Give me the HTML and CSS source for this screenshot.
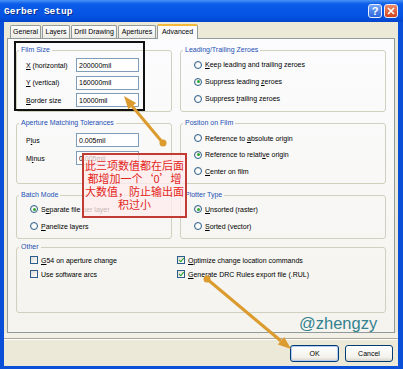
FILE: index.html
```html
<!DOCTYPE html>
<html lang="zh">
<head>
  <meta charset="UTF-8">
  <title>Gerber Setup</title>
  <link rel="stylesheet" href="styles.css">
</head>
<body>
  <div class="window">
    <div class="titlebar">
      <span class="title">Gerber Setup</span>
      <div class="title-btns">
        <span class="tbtn help">?</span>
        <span class="tbtn close">
          <svg width="8" height="8" viewBox="0 0 8 8"><path d="M1 1L7 7M7 1L1 7" stroke="#fff" stroke-width="1.6"/></svg>
        </span>
      </div>
    </div>

    <div class="client">
      <div class="tabs">
        <div class="tab t-general">General</div>
        <div class="tab t-layers">Layers</div>
        <div class="tab t-drill">Drill Drawing</div>
        <div class="tab t-apert">Apertures</div>
        <div class="tab t-adv active">Advanced</div>
      </div>

      <div class="panel">
        <div class="groups">
          <fieldset class="film">
            <legend>Film Size</legend>
            <div class="field-row"><label><u>X</u> (horizontal)</label><input value="200000mil"></div>
            <div class="field-row"><label><u>Y</u> (vertical)</label><input value="160000mil"></div>
            <div class="field-row"><label><u>B</u>order size</label><input value="10000mil"></div>
          </fieldset>

          <fieldset class="opts leading">
            <legend>Leading/Trailing Zeroes</legend>
            <div class="opt"><span class="radio"></span><span><u>K</u>eep leading and trailing zeroes</span></div>
            <div class="opt"><span class="radio on"></span><span>Suppress leading <u>z</u>eroes</span></div>
            <div class="opt"><span class="radio"></span><span>Suppress <u>t</u>railing zeroes</span></div>
          </fieldset>

          <fieldset class="aperture">
            <legend>Aperture Matching Tolerances</legend>
            <div class="field-row"><label>P<u>l</u>us</label><input value="0.005mil"></div>
            <div class="field-row"><label>M<u>i</u>nus</label><input value="0.005mil"></div>
          </fieldset>

          <fieldset class="opts position">
            <legend>Positon on Film</legend>
            <div class="opt"><span class="radio"></span><span>Reference to <u>a</u>bsolute origin</span></div>
            <div class="opt"><span class="radio on"></span><span>Reference to relati<u>v</u>e origin</span></div>
            <div class="opt"><span class="radio"></span><span><u>C</u>enter on film</span></div>
          </fieldset>

          <fieldset class="opts batch">
            <legend>Batch Mode</legend>
            <div class="opt"><span class="radio on"></span><span>S<u>e</u>parate file per layer</span></div>
            <div class="opt"><span class="radio"></span><span><u>P</u>anelize layers</span></div>
          </fieldset>

          <fieldset class="opts plotter">
            <legend>Plotter Type</legend>
            <div class="opt"><span class="radio on"></span><span><u>U</u>nsorted (raster)</span></div>
            <div class="opt"><span class="radio"></span><span><u>S</u>orted (vector)</span></div>
          </fieldset>
        </div>

        <fieldset class="other">
          <legend>Other</legend>
          <div class="checks">
            <div class="chk-row"><span class="check"></span><span><u>G</u>54 on aperture change</span></div>
            <div class="chk-row"><span class="check on"></span><span><u>O</u>ptimize change location commands</span></div>
            <div class="chk-row"><span class="check"></span><span>Use software arcs</span></div>
            <div class="chk-row"><span class="check on"></span><span><u>G</u>enerate DRC Rules export file (.RUL)</span></div>
          </div>
        </fieldset>
      </div>

      <div class="panel-foot"></div>
      <div class="buttons">
        <button class="btn default">OK</button>
        <button class="btn">Cancel</button>
      </div>
    </div>

    <!-- annotations drawn over the dialog -->
    <div class="film-mark"></div>
    <div class="callout">此三项数值都在后面<br>都增加一个‘0’增<br>大数值，防止输出面<br>积过小</div>
    <div class="watermark">@zhengzy</div>
    <svg class="arrows" width="403" height="369" viewBox="0 0 403 369">
      <g fill="#dc9b2e" stroke="#dc9b2e">
        <line x1="163" y1="143" x2="132" y2="106" stroke-width="3"/>
        <circle cx="163" cy="143" r="3.5" stroke="none"/>
        <polygon points="124,96 136.1,102.9 128.3,109.3" stroke="none"/>
        <line x1="207" y1="279" x2="281" y2="341" stroke-width="3"/>
        <circle cx="207" cy="279" r="3.5" stroke="none"/>
        <polygon points="291,349 277.8,344.5 284.2,336.9" stroke="none"/>
      </g>
    </svg>
  </div>
</body>
</html>
```

FILE: styles.css
```css
body {
  margin: 0;
  font-family: "Liberation Sans", Arial, sans-serif;
  font-size: 7px;
  color: #000;
}

.window {
  position: relative;
  width: 403px;
  height: 369px;
  background: #0a4fd8;
  display: flex;
  flex-direction: column;
  overflow: hidden;
}

/* title bar */
.titlebar {
  height: 22px;
  flex: none;
  display: flex;
  align-items: center;
  justify-content: space-between;
  padding: 0 5px 0 4px;
  background: linear-gradient(to bottom, #4a93f7 0%, #0b5ce9 18%, #0452e2 75%, #0345cb 100%);
}

.title {
  font-family: "Liberation Mono", monospace;
  font-weight: bold;
  font-size: 9.5px;
  color: #fff;
  text-shadow: 1px 1px 0 #0a2f8a;
}

.title-btns {
  display: flex;
  gap: 2px;
}

.tbtn {
  width: 14px;
  height: 14px;
  box-sizing: border-box;
  border: 1px solid #e8eefc;
  border-radius: 3px;
  display: flex;
  align-items: center;
  justify-content: center;
  color: #fff;
  font-weight: bold;
  font-size: 11px;
}

.tbtn.help {
  background: linear-gradient(to bottom, #76a5f7, #2b66dc);
}

.tbtn.close {
  background: linear-gradient(to bottom, #ee8a68, #d3431d);
}

/* dialog body */
.client {
  flex: 1;
  margin: 0 5px 3px 4px;
  background: #ece9d8;
  display: flex;
  flex-direction: column;
}

.tabs {
  display: flex;
  align-items: flex-end;
  gap: 1px;
  height: 14px;
  margin-top: 2px;
  padding-left: 6px;
}

.tab {
  height: 13px;
  box-sizing: border-box;
  border: 1px solid #919b9c;
  border-bottom: none;
  border-radius: 2px 2px 0 0;
  background: linear-gradient(to bottom, #ffffff, #ecebe5);
  text-align: center;
  line-height: 12px;
}

.t-general { width: 31px; }
.t-layers { width: 28px; }
.t-drill { width: 46px; }
.t-apert { width: 38px; }
.t-adv { width: 41px; }

.tab.active {
  height: 15px;
  margin-bottom: -1px;
  position: relative;
  z-index: 1;
  background: #fcfcfe;
  border-top: 2px solid #f5b93c;
  line-height: 12px;
}

.panel {
  height: 295px;
  box-sizing: border-box;
  margin: 0 3px;
  border: 1px solid #919b9c;
  background: linear-gradient(to bottom, #fcfcfe, #f4f3ee);
  padding: 7px 8px 0;
}

.groups {
  display: grid;
  grid-template-columns: 156px 206px;
  grid-template-rows: 66px 65px 48px;
  column-gap: 8px;
  row-gap: 7px;
}

fieldset {
  margin: 0;
  min-width: 0;
  box-sizing: border-box;
  border: 1px solid #d0d0bf;
  border-radius: 3px;
  padding: 0 0 0 13px;
}

legend {
  padding: 0 2px;
  margin-left: -11px;
  line-height: 8px;
  color: #2350b4;
}

/* text field rows */
.field-row {
  display: flex;
  align-items: center;
  height: 14px;
}

.film .field-row + .field-row {
  margin-top: 3.5px;
}

.aperture .field-row + .field-row {
  margin-top: 4px;
}

.field-row label {
  width: 50px;
}

.field-row input {
  width: 63px;
  height: 14px;
  box-sizing: border-box;
  border: 1px solid #7f9db9;
  padding: 0 2px;
  font-family: inherit;
  font-size: 7px;
  background: #fff;
}

.film {
  padding: 4px 0 0 9px;
}

.aperture {
  padding: 6px 0 0 9px;
}

.film legend,
.aperture legend {
  margin-left: -7px;
}

/* radio option lists */
.opt {
  display: flex;
  align-items: center;
  height: 17px;
}

.leading { padding-top: 2px; }
.position { padding-top: 3px; }
.position .opt { height: 16.5px; }
.batch, .plotter { padding-top: 1.5px; }

.radio {
  width: 8px;
  height: 8px;
  box-sizing: border-box;
  border: 1px solid #2c5d8c;
  border-radius: 50%;
  background: radial-gradient(circle at 60% 60%, #ffffff 30%, #dcdad0 100%);
  margin-right: 3px;
  display: flex;
  align-items: center;
  justify-content: center;
}

.radio.on::after {
  content: "";
  width: 3px;
  height: 3px;
  border-radius: 50%;
  background: #2fa52f;
}

/* other group */
.other {
  margin-top: 4px;
  height: 70px;
  padding-top: 2px;
}

.checks {
  display: grid;
  grid-template-columns: 147px 1fr;
  grid-auto-rows: 14px;
}

.chk-row {
  display: flex;
  align-items: center;
}

.check {
  width: 8px;
  height: 8px;
  box-sizing: border-box;
  border: 1px solid #2c5d8c;
  background: linear-gradient(135deg, #dcdad0, #ffffff);
  margin-right: 3px;
  position: relative;
}

.check.on::after {
  content: "";
  position: absolute;
  left: 1.5px;
  top: 0;
  width: 2px;
  height: 3.5px;
  border-right: 1.3px solid #21a121;
  border-bottom: 1.3px solid #21a121;
  transform: rotate(40deg);
}

/* bottom buttons */
.panel-foot {
  height: 5px;
  background: #f2f0e7;
  border-bottom: 1px solid #aca899;
  box-shadow: 0 1px 0 #ffffff;
}

.buttons {
  display: flex;
  justify-content: flex-end;
  gap: 6px;
  margin-top: 6px;
  padding-right: 5px;
}

.btn {
  width: 48px;
  height: 17px;
  border: 1px solid #003c74;
  border-radius: 3px;
  background: linear-gradient(to bottom, #ffffff, #f3f2ec 75%, #d8d3c8);
  font-family: inherit;
  font-size: 7px;
  color: #000;
  padding: 0;
}

.btn.default {
  width: 49px;
  box-shadow: inset 0 0 0 1px #b6cdf3;
}

/* annotations */
.film-mark {
  position: absolute;
  left: 14px;
  top: 41px;
  width: 131px;
  height: 70px;
  box-sizing: border-box;
  border: 2px solid #111;
}

.callout {
  position: absolute;
  left: 82px;
  top: 153px;
  width: 105px;
  height: 65px;
  box-sizing: border-box;
  padding-top: 4px;
  border: 2px solid #c23b32;
  background: rgba(255, 236, 236, 0.75);
  color: #e3261c;
  font-family: "Noto Sans CJK SC", sans-serif;
  font-size: 11px;
  line-height: 13px;
  text-align: center;
  white-space: nowrap;
}

.watermark {
  position: absolute;
  left: 299px;
  top: 314px;
  font-size: 16.5px;
  color: #33828f;
}

.arrows {
  position: absolute;
  left: 0;
  top: 0;
  pointer-events: none;
}
```
